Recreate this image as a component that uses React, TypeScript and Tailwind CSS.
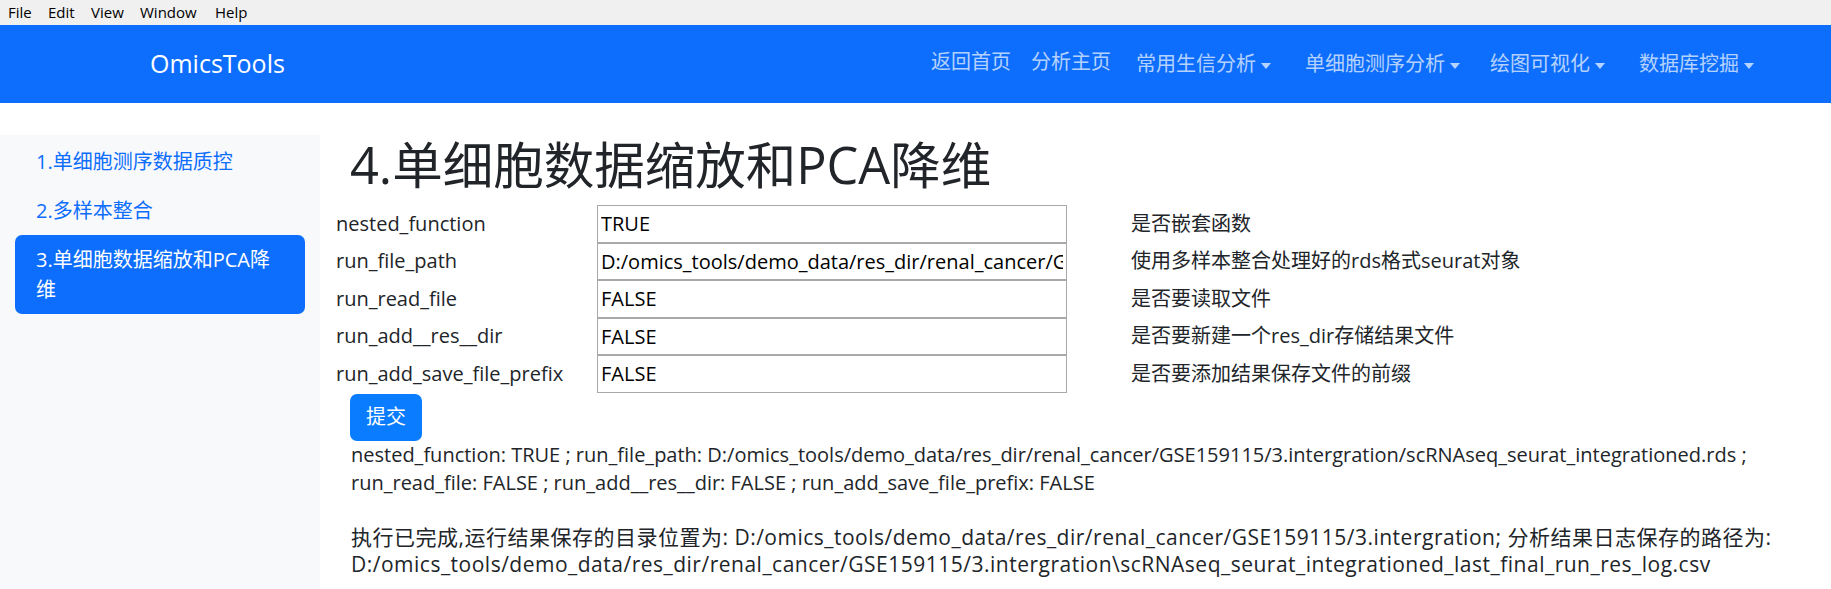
import React from 'react';

const params = [
  { name: 'nested_function', value: 'TRUE', desc: '是否嵌套函数' },
  { name: 'run_file_path', value: 'D:/omics_tools/demo_data/res_dir/renal_cancer/GSE159115/3.intergration/scRNAseq_seurat_integrationed.rds', desc: '使用多样本整合处理好的rds格式seurat对象' },
  { name: 'run_read_file', value: 'FALSE', desc: '是否要读取文件' },
  { name: 'run_add__res__dir', value: 'FALSE', desc: '是否要新建一个res_dir存储结果文件' },
  { name: 'run_add_save_file_prefix', value: 'FALSE', desc: '是否要添加结果保存文件的前缀' },
];

function Caret() {
  return (
    <span className="ml-[5px] inline-block h-0 w-0 border-x-[5px] border-t-[6px] border-x-transparent border-t-current align-middle" />
  );
}

export default function App() {
  return (
    <div className="h-[589px] w-[1831px] overflow-hidden bg-white font-['Open_Sans','Noto_Sans_CJK_SC',sans-serif] text-[#212529]">
      {/* window menu */}
      <div className="flex h-[25px] items-center bg-[#f0f0f0] pl-[8px] text-[15px] text-black">
        <span className="w-[40px]">File</span>
        <span className="w-[43px]">Edit</span>
        <span className="w-[49px]">View</span>
        <span className="w-[75px]">Window</span>
        <span>Help</span>
      </div>

      {/* navbar */}
      <nav className="flex h-[78px] items-center bg-[#0d6efd]">
        <a className="ml-[150px] text-[25px] text-white">OmicsTools</a>
        <ul className="ml-auto mr-[76px] flex items-center text-[20px] text-white/70">
          <li className="w-[100px] -mt-[5px]">返回首页</li>
          <li className="w-[105px] -mt-[5px]">分析主页</li>
          <li className="w-[169px]">常用生信分析<Caret /></li>
          <li className="w-[185px]">单细胞测序分析<Caret /></li>
          <li className="w-[149px]">绘图可视化<Caret /></li>
          <li className="w-[116px]">数据库挖掘<Caret /></li>
        </ul>
      </nav>

      <div className="mt-[32px] flex">
        {/* sidebar */}
        <aside className="h-[454px] w-[320px] shrink-0 bg-[#f8f9fa] px-[15px] pt-[2px] text-[20px] leading-[30px]">
          <div className="px-[21px] py-[9.5px] text-[#0d6efd]">1.单细胞测序数据质控</div>
          <div className="px-[21px] py-[9.5px] text-[#0d6efd]">2.多样本整合</div>
          <div className="rounded-[7px] bg-[#0d6efd] px-[21px] py-[9.5px] text-white">
            3.单细胞数据缩放和PCA降<br />维
          </div>
        </aside>

        {/* main */}
        <main className="flex-1 pl-[16px] text-[20px]">
          <h1 className="mb-[10px] pl-[14px] text-[50.5px] font-normal leading-[60px]">4.单细胞数据缩放和PCA降维</h1>

          <div className="flex flex-col">
            {params.map((p) => (
              <div key={p.name} className="flex h-[37.5px] items-center">
                <label className="w-[261px] shrink-0">{p.name}</label>
                <input
                  readOnly
                  value={p.value}
                  className="h-full w-[470px] shrink-0 border border-[#a9a9a9] px-[3px] text-[20px] text-black outline-none"
                />
                <span className="ml-[64px]">{p.desc}</span>
              </div>
            ))}
          </div>

          <button className="ml-[14px] mt-[1px] h-[47px] w-[72px] rounded-[7px] bg-[#0a7cff] text-[20px] text-white">提交</button>

          <p className="ml-[15px] whitespace-nowrap leading-[28px]">
            nested_function: TRUE ; run_file_path: D:/omics_tools/demo_data/res_dir/renal_cancer/GSE159115/3.intergration/scRNAseq_seurat_integrationed.rds ;
            <br />
            run_read_file: FALSE ; run_add__res__dir: FALSE ; run_add_save_file_prefix: FALSE
          </p>

          <p className="ml-[15px] mt-[27px] whitespace-nowrap text-[21px] leading-[27px] tracking-[0.5px]">
            执行已完成,运行结果保存的目录位置为: D:/omics_tools/demo_data/res_dir/renal_cancer/GSE159115/3.intergration; 分析结果日志保存的路径为:
            <br />
            D:/omics_tools/demo_data/res_dir/renal_cancer/GSE159115/3.intergration\scRNAseq_seurat_integrationed_last_final_run_res_log.csv
          </p>
        </main>
      </div>
    </div>
  );
}
